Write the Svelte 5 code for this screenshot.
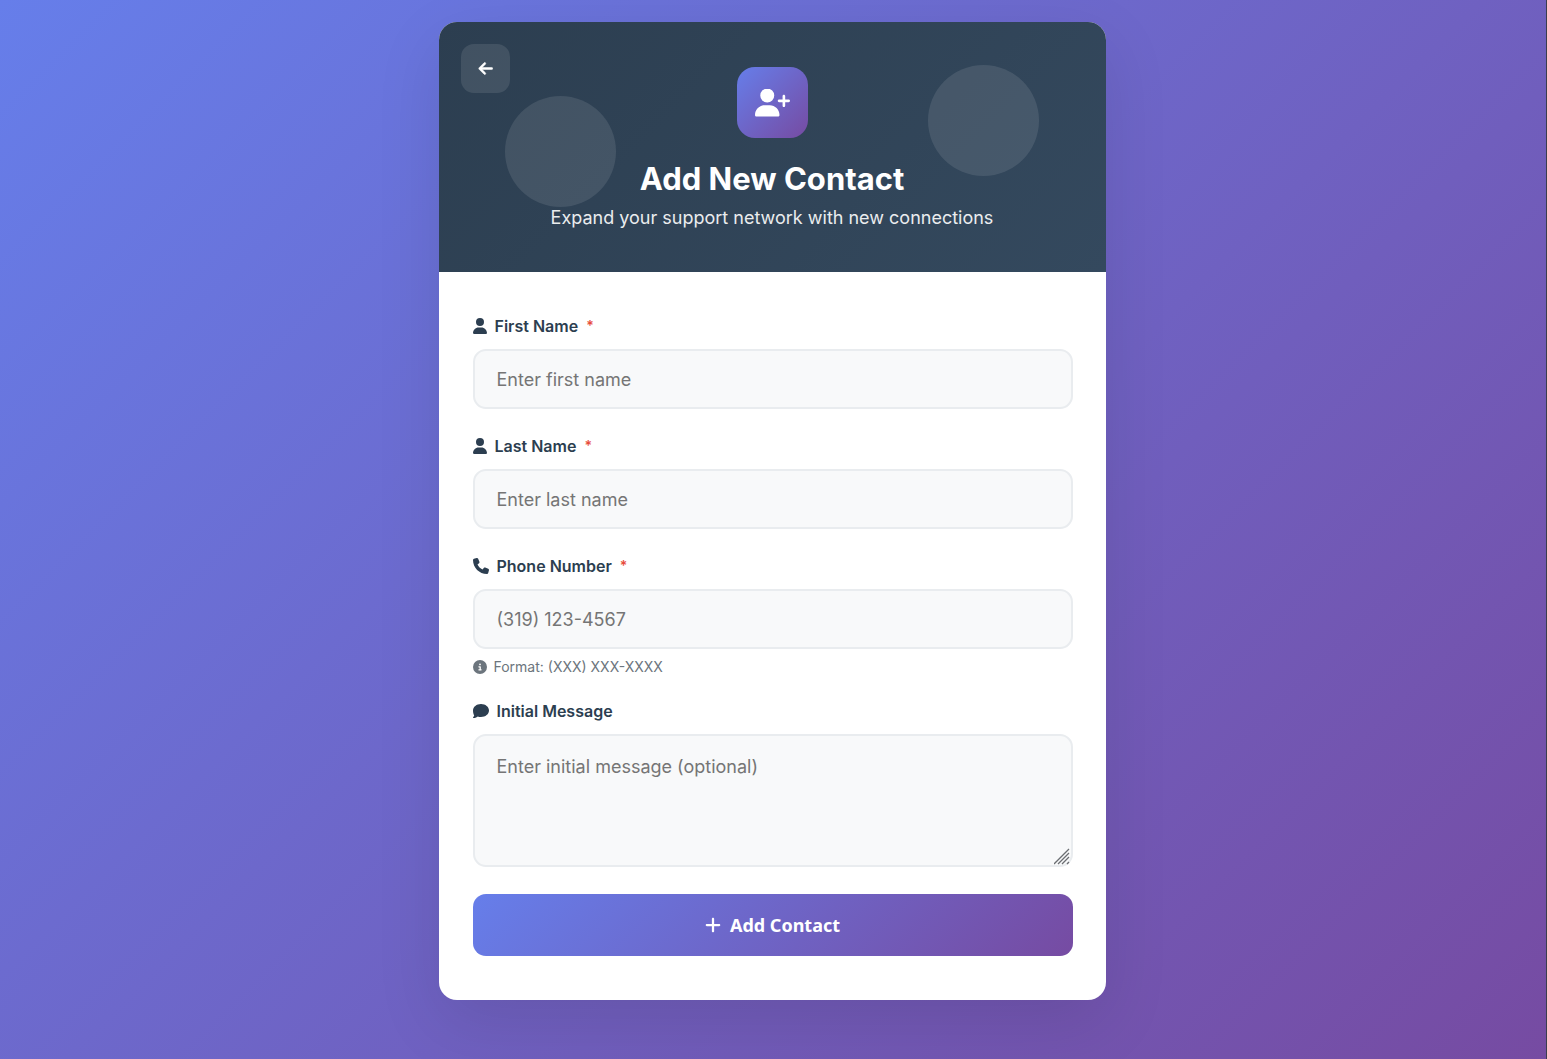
<script>
  let firstName = $state('');
  let lastName = $state('');
  let phone = $state('');
  let message = $state('');

  const userPath = 'M224 256A128 128 0 1 0 224 0a128 128 0 1 0 0 256zm-45.700 48C79.800 304 0 383.800 0 482.300C0 498.700 13.300 512 29.700 512H418.300c16.400 0 29.700-13.300 29.700-29.700C448 383.800 368.200 304 269.700 304H178.300z';
  const phonePath = 'M164.900 24.600c-7.700-18.600-28-28.500-47.400-23.200l-88 24C12.100 30.200 0 46 0 64C0 311.400 200.600 512 448 512c18 0 33.800-12.100 38.600-29.500l24-88c5.300-19.400-4.600-39.700-23.200-47.400l-96-40c-16.300-6.800-35.200-2.100-46.300 11.600L304.700 368C234.300 334.700 177.300 277.700 144 207.300L193.300 167c13.700-11.200 18.400-30 11.600-46.300l-40-96z';
  const infoPath = 'M256 512A256 256 0 1 0 256 0a256 256 0 1 0 0 512zM216 336h24V272H216c-13.300 0-24-10.700-24-24s10.700-24 24-24h48c13.300 0 24 10.700 24 24v88h8c13.300 0 24 10.700 24 24s-10.700 24-24 24H216c-13.300 0-24-10.700-24-24s10.700-24 24-24zm40-208a32 32 0 1 1 0 64 32 32 0 1 1 0-64z';
  const commentPath = 'M512 240c0 114.900-114.600 208-256 208c-37.100 0-72.300-6.400-104.100-17.900c-11.900 8.700-31.300 20.600-54.300 30.600C73.600 471.100 44.700 480 16 480c-6.500 0-12.300-3.900-14.800-9.900c-2.500-6-1.100-12.800 3.400-17.400c.4-.4 1.100-1.200 2.100-2.300c2-2.300 5-5.800 8.500-10.500c7-9.500 16.300-23.500 24.100-41.700C14.800 357.900 0 300.900 0 240C0 125.100 114.600 32 256 32s256 93.100 256 208z';
  const backPath = 'M9.400 233.400c-12.500 12.500-12.500 32.800 0 45.300l160 160c12.500 12.500 32.800 12.500 45.300 0s12.500-32.800 0-45.300L109.200 288H416c17.700 0 32-14.300 32-32s-14.300-32-32-32H109.300L214.600 118.600c12.500-12.500 12.500-32.800 0-45.300s-32.800-12.500-45.300 0l-160 160z';
  const plusPath = 'M256 80c0-17.700-14.300-32-32-32s-32 14.300-32 32V224H48c-17.700 0-32 14.300-32 32s14.300 32 32 32H192V432c0 17.700 14.300 32 32 32s32-14.300 32-32V288H400c17.700 0 32-14.300 32-32s-14.300-32-32-32H256V80z';
  const userPlusPath = 'M96 128a128 128 0 1 1 256 0A128 128 0 1 1 96 128zM0 482.300C0 383.800 79.800 304 178.300 304h91.400C368.200 304 448 383.800 448 482.300c0 16.400-13.300 29.700-29.700 29.700H29.700C13.300 512 0 498.700 0 482.300zM504 312V248H440c-13.300 0-24-10.700-24-24s10.700-24 24-24h64V136c0-13.300 10.700-24 24-24s24 10.700 24 24v64h64c13.300 0 24 10.700 24 24s-10.700 24-24 24H552v64c0 13.300-10.700 24-24 24s-24-10.700-24-24z';
</script>

<main class="page">
  <div class="card">
    <header class="header">
      <span class="bubble bubble-left"></span>
      <span class="bubble bubble-right"></span>
      <button class="back" type="button" aria-label="Go back">
        <svg width="15" height="16" viewBox="-16 16 464 512" aria-hidden="true"><path d={backPath} stroke="currentColor" stroke-width="16" /></svg>
      </button>
      <div class="badge">
        <svg width="35" height="28" viewBox="0 8 640 512" aria-hidden="true"><path d={userPlusPath} /></svg>
      </div>
      <h1>Add New Contact</h1>
      <p>Expand your support network with new connections</p>
    </header>

    <form class="form" onsubmit={(e) => e.preventDefault()}>
      <div class="field">
        <label for="first-name">
          <svg width="14" height="16" viewBox="0 0 448 512" aria-hidden="true"><path d={userPath} /></svg>
          First Name <span class="required">*</span>
        </label>
        <input id="first-name" type="text" placeholder="Enter first name" bind:value={firstName} />
      </div>

      <div class="field">
        <label for="last-name">
          <svg width="14" height="16" viewBox="0 0 448 512" aria-hidden="true"><path d={userPath} /></svg>
          Last Name <span class="required">*</span>
        </label>
        <input id="last-name" type="text" placeholder="Enter last name" bind:value={lastName} />
      </div>

      <div class="field">
        <label for="phone">
          <svg width="16" height="16" viewBox="0 0 512 512" aria-hidden="true"><path d={phonePath} /></svg>
          Phone Number <span class="required">*</span>
        </label>
        <input id="phone" type="tel" placeholder="(319) 123-4567" aria-describedby="phone-hint" bind:value={phone} />
        <div class="hint" id="phone-hint">
          <svg width="14" height="14" viewBox="0 0 512 512" aria-hidden="true"><path d={infoPath} /></svg>
          Format: (XXX) XXX-XXXX
        </div>
      </div>

      <div class="field message">
        <label for="message">
          <svg width="16" height="16" viewBox="0 0 512 512" aria-hidden="true"><path d={commentPath} /></svg>
          Initial Message
        </label>
        <textarea id="message" placeholder="Enter initial message (optional)" bind:value={message}></textarea>
        <svg class="grip" width="17" height="17" viewBox="0 0 17 17" aria-hidden="true">
          <path d="M0 16L15 1M4 16L15 5M8 16L15 9M13 16L15 14" />
        </svg>
      </div>

      <button class="submit" type="submit">
        <svg width="16" height="18" viewBox="0 0 448 512" aria-hidden="true"><path d={plusPath} /></svg>
        Add Contact
      </button>
    </form>
  </div>
</main>

<style>
  :global(body) {
    margin: 0;
  }

  .page {
    box-sizing: border-box;
    min-height: 100vh;
    padding: 22px 24px 22px 22px;
    border-right: 1px solid #3a3d4d;
    background: linear-gradient(135deg, #667eea 0%, #764ba2 100%);
    font-family: Inter, sans-serif;
  }

  .card {
    max-width: 667px;
    margin: 0 auto;
    overflow: hidden;
    border-radius: 18px;
    background: #fff;
    box-shadow: 0 22px 66px rgba(0, 0, 0, 0.1);
  }

  svg {
    flex: none;
    fill: currentColor;
  }

  .header {
    position: relative;
    display: flex;
    flex-direction: column;
    align-items: center;
    padding: 45px 33px 40px;
    background: linear-gradient(135deg, #2c3e50 0%, #34495e 100%);
    color: #fff;
    text-align: center;
  }

  .bubble {
    position: absolute;
    width: 111px;
    height: 111px;
    border-radius: 50%;
    background: rgba(255, 255, 255, 0.1);
  }

  .bubble-left {
    top: 74px;
    left: 10%;
  }

  .bubble-right {
    top: 43px;
    right: 10%;
  }

  .back {
    position: absolute;
    top: 22px;
    left: 22px;
    display: flex;
    align-items: center;
    justify-content: center;
    width: 49px;
    height: 49px;
    padding: 0;
    border: 0;
    border-radius: 13px;
    background: rgba(255, 255, 255, 0.1);
    color: #fff;
    cursor: pointer;
  }

  .badge {
    display: flex;
    align-items: center;
    justify-content: center;
    width: 71px;
    height: 71px;
    margin-bottom: 22px;
    border-radius: 18px;
    background: linear-gradient(135deg, #667eea 0%, #764ba2 100%);
  }

  h1,
  p {
    position: relative;
    margin: 0;
  }

  h1 {
    font-size: 31px;
    font-weight: 700;
    line-height: 38px;
  }

  p {
    margin-top: 6px;
    font-size: 18px;
    line-height: 28px;
    opacity: 0.9;
  }

  .form {
    display: flex;
    flex-direction: column;
    gap: 27px;
    padding: 44px 33px 44px 34px;
  }

  .field {
    display: flex;
    flex-direction: column;
  }

  .message {
    position: relative;
  }

  label {
    display: flex;
    align-items: center;
    gap: 8px;
    margin-bottom: 13px;
    color: #2c3e50;
    font-size: 16px;
    font-weight: 600;
    line-height: 20px;
  }

  .required {
    color: #e74c3c;
    font-size: 14px;
    font-weight: 600;
  }

  input,
  textarea {
    box-sizing: border-box;
    width: 100%;
    border: 2px solid #e9ecef;
    border-radius: 13px;
    background: #f8f9fa;
    color: #2c3e50;
    font-family: inherit;
    font-size: 18px;
  }

  input {
    height: 60px;
    padding: 0 22px;
  }

  textarea {
    display: block;
    height: 133px;
    padding: 18px 22px;
    line-height: 26px;
    resize: vertical;
  }

  textarea::-webkit-resizer {
    background: transparent;
  }

  .grip {
    position: absolute;
    right: 2px;
    bottom: 2px;
    fill: none;
    stroke: #6b6e72;
    stroke-width: 1.3;
    pointer-events: none;
  }

  input::placeholder,
  textarea::placeholder {
    color: #757575;
  }

  .hint {
    display: flex;
    align-items: center;
    gap: 7px;
    margin-top: 11px;
    color: #6c757d;
    font-size: 14px;
    line-height: 14px;
  }

  .submit {
    display: flex;
    align-items: center;
    justify-content: center;
    gap: 9px;
    height: 62px;
    padding: 0 22px;
    border: 0;
    border-radius: 13px;
    background: linear-gradient(135deg, #667eea 0%, #764ba2 100%);
    color: #fff;
    font-family: "Noto Sans", sans-serif;
    font-size: 18px;
    font-weight: 700;
    cursor: pointer;
  }
</style>
